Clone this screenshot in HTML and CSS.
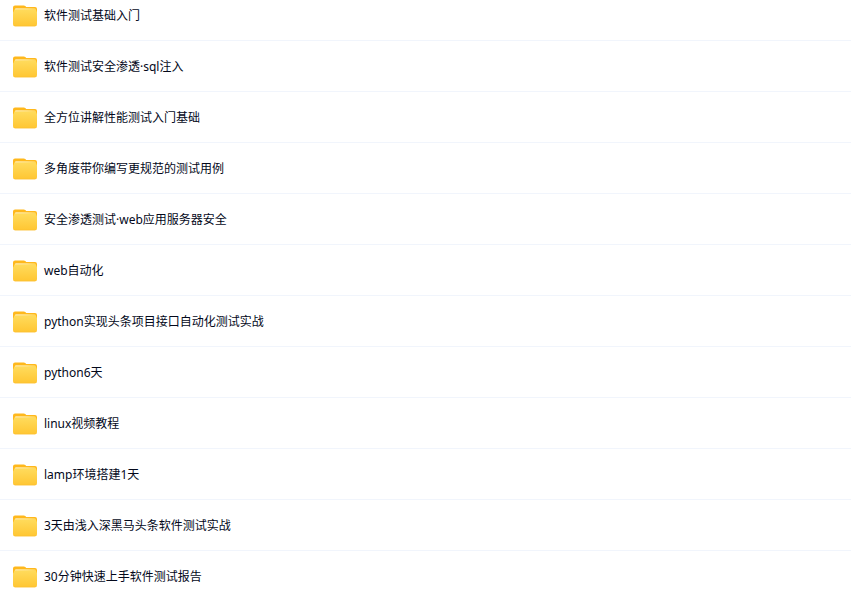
FILE: index.html
```
<!DOCTYPE html>
<html lang="zh-CN">
<head>
<meta charset="utf-8">
<title>软件测试</title>
<link rel="stylesheet" href="styles.css">
</head>
<body>
<svg class="defs" aria-hidden="true">
  <defs>
    <linearGradient id="front" x1="0" y1="0" x2="0" y2="1">
      <stop offset="0" stop-color="#ffdc5e"/>
      <stop offset="1" stop-color="#ffc632"/>
    </linearGradient>
    <linearGradient id="shine" x1="0" y1="0" x2="1" y2="0">
      <stop offset="0" stop-color="#ffe9b0"/>
      <stop offset="0.6" stop-color="#ffe28a"/>
      <stop offset="1" stop-color="#ffd050"/>
    </linearGradient>
    <symbol id="folder" viewBox="0 0 24 22">
      <path fill="#ffb81c" d="M2 .4h8.800q.9 0 1.500.7l.9.900h8.800q2 0 2 2V12H0V2.400q0-2 2-2z"/>
      <path fill="url(#front)" d="M0 7.500Q.8 6.500 1.300 5 1.800 3.800 3 3.800h18.500q1.200 0 1.500 1T24 7.300v12q0 2-2 2H2q-2 0-2-2z"/>
      <path fill="url(#shine)" d="M1.800 4.600Q2 3.200 3.200 3.200h18q1.300 0 1.600 1.400-.6-.2-1.600-.2H3.400q-1 0-1.600.2z"/>
      <path fill="#fcbc2e" d="M.3 20.300q.5 1 1.700 1h20q1.200 0 1.700-1-.6.400-1.700.4H2q-1.100 0-1.700-.4z"/>
    </symbol>
  </defs>
</svg>
<ul class="files">
  <li class="file"><svg class="icon" aria-hidden="true"><use href="#folder"/></svg><a class="name" href="#">软件测试基础入门</a></li>
  <li class="file"><svg class="icon" aria-hidden="true"><use href="#folder"/></svg><a class="name" href="#">软件测试安全渗透·sql注入</a></li>
  <li class="file"><svg class="icon" aria-hidden="true"><use href="#folder"/></svg><a class="name" href="#">全方位讲解性能测试入门基础</a></li>
  <li class="file"><svg class="icon" aria-hidden="true"><use href="#folder"/></svg><a class="name" href="#">多角度带你编写更规范的测试用例</a></li>
  <li class="file"><svg class="icon" aria-hidden="true"><use href="#folder"/></svg><a class="name" href="#">安全渗透测试·web应用服务器安全</a></li>
  <li class="file"><svg class="icon" aria-hidden="true"><use href="#folder"/></svg><a class="name" href="#">web自动化</a></li>
  <li class="file"><svg class="icon" aria-hidden="true"><use href="#folder"/></svg><a class="name" href="#">python实现头条项目接口自动化测试实战</a></li>
  <li class="file"><svg class="icon" aria-hidden="true"><use href="#folder"/></svg><a class="name" href="#">python6天</a></li>
  <li class="file"><svg class="icon" aria-hidden="true"><use href="#folder"/></svg><a class="name" href="#">linux视频教程</a></li>
  <li class="file"><svg class="icon" aria-hidden="true"><use href="#folder"/></svg><a class="name" href="#">lamp环境搭建1天</a></li>
  <li class="file"><svg class="icon" aria-hidden="true"><use href="#folder"/></svg><a class="name" href="#">3天由浅入深黑马头条软件测试实战</a></li>
  <li class="file"><svg class="icon" aria-hidden="true"><use href="#folder"/></svg><a class="name" href="#">30分钟快速上手软件测试报告</a></li>
</ul>
</body>
</html>
```
FILE: styles.css
```
* {
  box-sizing: border-box;
}

html {
  overflow: hidden;
}

body {
  margin: 0;
  background: #fff;
  color: #03081a;
  font: 12px/20px "Noto Sans", "Noto Sans CJK SC", sans-serif;
}

.defs {
  position: absolute;
  width: 0;
  height: 0;
}

/* The list is scrolled slightly past its first row's top padding. */
.files {
  margin: -10px 0 0;
  padding: 0;
  list-style: none;
}

.file {
  display: flex;
  align-items: center;
  gap: 7px;
  padding: 15px 13px 13px;
  border-bottom: 1px solid #f1f5fc;
}

.icon {
  flex: none;
  width: 24px;
  height: 22px;
}

.name {
  color: inherit;
  text-decoration: none;
}
```
